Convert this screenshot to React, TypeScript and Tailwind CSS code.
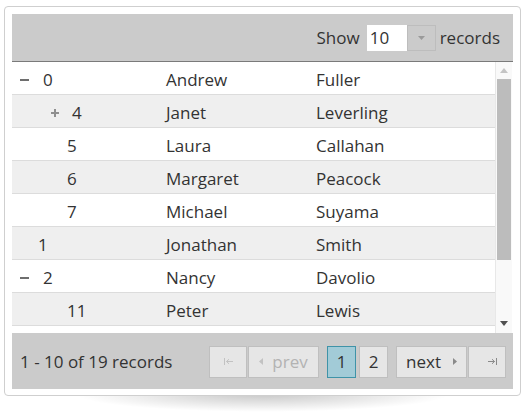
import React from "react";

type Row = { t?: "minus" | "plus"; id: string; pl: number; f: string; l: string };

const rows: Row[] = [
  { t: "minus", id: "0", pl: 8, f: "Andrew", l: "Fuller" },
  { t: "plus", id: "4", pl: 39, f: "Janet", l: "Leverling" },
  { id: "5", pl: 55, f: "Laura", l: "Callahan" },
  { id: "6", pl: 55, f: "Margaret", l: "Peacock" },
  { id: "7", pl: 55, f: "Michael", l: "Suyama" },
  { id: "1", pl: 26, f: "Jonathan", l: "Smith" },
  { t: "minus", id: "2", pl: 8, f: "Nancy", l: "Davolio" },
  { id: "11", pl: 55, f: "Peter", l: "Lewis" },
];

function Toggle({ t }: { t: "minus" | "plus" }) {
  if (t === "minus")
    return (
      <span className="mr-[14px] flex h-[9px] w-[9px] items-center">
        <span className="h-[2px] w-[9px] bg-[#6e6e6e]" />
      </span>
    );
  return (
    <span className="relative mr-[13px] flex h-[8px] w-[8px] items-center justify-center">
      <span className="absolute h-[2px] w-[8px] bg-[#8f8f8f]" />
      <span className="absolute h-[8px] w-[2px] bg-[#8f8f8f]" />
    </span>
  );
}

export default function App() {
  return (
    <div
      className="h-[418px] w-[526px] bg-white pl-[4px] pt-[6px] text-[17px] text-[#333]"
      style={{ fontFamily: '"Open Sans", "Noto Sans", sans-serif' }}
    >
      <div className="relative w-[517px]">
        <div className="pointer-events-none absolute bottom-[-16px] left-[70px] right-[70px] h-[18px] bg-[radial-gradient(ellipse_at_top,rgba(0,0,0,0.22),rgba(0,0,0,0)_70%)]" />
        <div className="relative rounded-[4px] border border-[#cfcfcf] bg-white px-[7px] pb-[6px] pt-[7px]">
          {/* header */}
          <div className="flex h-[48px] items-center justify-end border-b border-[#7a7a7a] bg-[#cbcbcb] pr-[13px]">
            <span className="leading-none">Show</span>
            <div className="ml-[7px] mr-[4px] flex h-[26px]">
              <div className="flex w-[40px] items-center bg-white pl-[3px] leading-none">10</div>
              <div className="flex w-[29px] items-center justify-center border border-[#bdbdbd] bg-[#cbcbcb]">
                <svg width="7" height="4" viewBox="0 0 7 4">
                  <path d="M0 0 L7 0 L3.5 4 Z" fill="#9a9a9a" />
                </svg>
              </div>
            </div>
            <span className="leading-none">records</span>
          </div>
          {/* body */}
          <div className="flex h-[271px] overflow-hidden">
            <div className="w-[483px]">
              {rows.map((r, i) => (
                <div
                  key={i}
                  className={`flex h-[33px] items-center border-b border-[#dcdcdc] pt-[3px] ${i % 2 === 1 ? "bg-[#efefef]" : "bg-white"}`}
                >
                  <div className="flex w-[144px] items-center" style={{ paddingLeft: r.pl }}>
                    {r.t && <Toggle t={r.t} />}
                    <span>{r.id}</span>
                  </div>
                  <div className="w-[150px] pl-[10px]">{r.f}</div>
                  <div className="flex-1 pl-[10px]">{r.l}</div>
                </div>
              ))}
              <div className="h-[7px] bg-white" />
            </div>
            {/* scrollbar */}
            <div className="relative w-[17px] border-l border-[#e8e8e8] bg-[#f9f9f9]">
              <svg className="absolute left-[4px] top-[6px]" width="8" height="5" viewBox="0 0 8 5">
                <path d="M0 5 L8 5 L4 0 Z" fill="#c4c4c4" />
              </svg>
              <div className="absolute left-[1px] top-[17px] h-[181px] w-[14px] bg-[#bcbcbc]" />
              <svg className="absolute left-[4px] top-[259px]" width="8" height="5" viewBox="0 0 8 5">
                <path d="M0 0 L8 0 L4 5 Z" fill="#505050" />
              </svg>
            </div>
          </div>
          {/* footer */}
          <div className="flex h-[56px] items-center bg-[#cbcbcb] pl-[8px] pr-[7px] pt-[1px]">
            <span>1 - 10 of 19 records</span>
            <div className="ml-auto flex items-center">
              <div className="flex h-[32px] w-[38px] items-center justify-center border border-[#bfbfbf] bg-[#e6e6e6]">
                <svg width="9" height="7" viewBox="0 0 9 7">
                  <path d="M0.5 0 V7 M2.5 3.5 H9 M2.5 3.5 L5 1.2 M2.5 3.5 L5 5.8" stroke="#c2c2c2" strokeWidth="1" fill="none" />
                </svg>
              </div>
              <div className="ml-[1px] flex h-[32px] w-[71px] items-center justify-center border border-[#bfbfbf] bg-[#e6e6e6] text-[#b3b3b3]">
                <svg className="mr-[9px]" width="4" height="7" viewBox="0 0 4 7">
                  <path d="M4 0 L4 7 L0 3.5 Z" fill="#c2c2c2" />
                </svg>
                <span className="leading-none">prev</span>
              </div>
              <div className="ml-[8px] flex h-[32px] w-[29px] items-center justify-center border border-[#3f93a8] bg-[#a2cbd7]">
                1
              </div>
              <div className="ml-[3px] flex h-[32px] w-[29px] items-center justify-center border border-[#bfbfbf] bg-[#e6e6e6]">
                2
              </div>
              <div className="ml-[8px] flex h-[32px] w-[71px] items-center justify-center border border-[#bfbfbf] bg-[#e6e6e6]">
                <span className="leading-none">next</span>
                <svg className="ml-[12px]" width="4" height="7" viewBox="0 0 4 7">
                  <path d="M0 0 L0 7 L4 3.5 Z" fill="#8a8a8a" />
                </svg>
              </div>
              <div className="ml-[1px] flex h-[32px] w-[38px] items-center justify-center border border-[#bfbfbf] bg-[#e6e6e6]">
                <svg className="ml-[10px]" width="9" height="7" viewBox="0 0 9 7">
                  <path d="M8.5 0 V7 M0 3.5 H6.5 M6.5 3.5 L4 1.2 M6.5 3.5 L4 5.8" stroke="#8a8a8a" strokeWidth="1" fill="none" />
                </svg>
              </div>
            </div>
          </div>
        </div>
      </div>
    </div>
  );
}
